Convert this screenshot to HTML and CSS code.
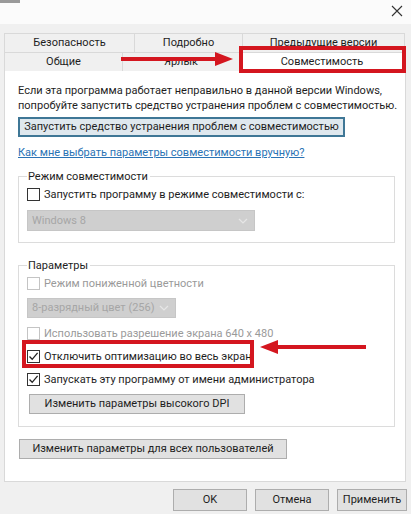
FILE: index.html
```html
<!DOCTYPE html>
<html lang="ru">
<head>
<meta charset="utf-8">
<link rel="stylesheet" href="styles.css">
</head>
<body>
<div class="window">
  <div class="titlebar">
    <span class="corner"></span>
    <svg class="close" width="12" height="12" viewBox="0 0 12 12"><path d="M1 1 L11 11 M11 1 L1 11" stroke="#333" stroke-width="1.1" fill="none"/></svg>
  </div>
  <div class="tabs">
    <div class="tabrow row1">
      <div class="tab">Безопасность</div>
      <div class="tab">Подробно</div>
      <div class="tab">Предыдущие версии</div>
    </div>
    <div class="tabrow row2">
      <div class="tab">Общие</div>
      <div class="tab">Ярлык</div>
      <div class="tab active">Совместимость</div>
    </div>
  </div>
  <div class="panel">
    <p class="intro">Если эта программа работает неправильно в данной версии Windows,<br>попробуйте запустить средство устранения проблем с совместимостью.</p>
    <div class="btn focus b-trouble">Запустить средство устранения проблем с совместимостью</div>
    <a class="link" href="#">Как мне выбрать параметры совместимости вручную?</a>
    <div class="group g1">
      <div class="legend">Режим совместимости</div>
      <div class="cb first"><span class="box"></span><span>Запустить программу в режиме совместимости с:</span></div>
      <div class="select s-win">Windows 8<svg class="chev" width="10" height="6" viewBox="0 0 10 6"><path d="M1 1 L5 5 L9 1" stroke="#e6e6e6" stroke-width="1.2" fill="none"/></svg></div>
    </div>
    <div class="group g2">
      <div class="legend">Параметры</div>
      <div class="cb first disabled"><span class="box"></span><span>Режим пониженной цветности</span></div>
      <div class="select s-color">8-разрядный цвет (256)<svg class="chev" width="10" height="6" viewBox="0 0 10 6"><path d="M1 1 L5 5 L9 1" stroke="#e6e6e6" stroke-width="1.2" fill="none"/></svg></div>
      <div class="cb disabled"><span class="box"></span><span>Использовать разрешение экрана 640 x 480</span></div>
      <div class="cb checked"><span class="box"><svg width="11" height="11" viewBox="0 0 11 11"><path d="M1.5 5.5 L4.2 8.3 L9.6 1.8" stroke="#222" stroke-width="1.3" fill="none"/></svg></span><span>Отключить оптимизацию во весь экран</span></div>
      <div class="cb checked"><span class="box"><svg width="11" height="11" viewBox="0 0 11 11"><path d="M1.5 5.5 L4.2 8.3 L9.6 1.8" stroke="#222" stroke-width="1.3" fill="none"/></svg></span><span>Запускать эту программу от имени администратора</span></div>
      <div class="btn b-dpi">Изменить параметры высокого DPI</div>
    </div>
    <div class="btn b-all">Изменить параметры для всех пользователей</div>
  </div>
  <div class="footer">
    <div class="btn b-ok">OK</div>
    <div class="btn b-cancel">Отмена</div>
    <div class="btn b-apply">Применить</div>
  </div>

  <div class="redbox rb-tab"></div>
  <div class="redbox rb-opt"></div>
  <svg class="arrow arrow-right" width="112" height="16" viewBox="0 0 112 16"><path d="M0 8 H96" stroke="#d4161f" stroke-width="4"/><path d="M94 1 L112 8 L94 15 Z" fill="#d4161f"/></svg>
  <svg class="arrow arrow-left" width="106" height="16" viewBox="0 0 106 16"><path d="M16 8 H106" stroke="#d4161f" stroke-width="4"/><path d="M18 1 L0 8 L18 15 Z" fill="#d4161f"/></svg>
</div>
</body>
</html>
```

FILE: styles.css
```css
* { box-sizing: border-box; }
html, body { margin: 0; padding: 0; }
body {
  background: #f0f0f0;
  font-family: Roboto, "Liberation Sans", Arial, sans-serif;
  font-size: 11px;
  line-height: 15px;
  color: #1e1e1e;
}
.window {
  position: relative;
  width: 411px;
  height: 514px;
  overflow: hidden;
}
.titlebar {
  height: 24px;
  background: #fbfbfb;
  position: relative;
}
.corner {
  position: absolute;
  left: 0; top: 0;
  width: 20px; height: 3px;
  background: #9a9a9a;
}
.close {
  position: absolute;
  right: 8px; top: 5px;
}
.tabs {
  margin-top: 9px;
  margin-left: 4px;
  width: 401px;
  position: relative;
  z-index: 2;
}
.tabrow { display: grid; }
.row1 { grid-template-columns: 131px 108px 162px; height: 19px; }
.row2 { grid-template-columns: 119px 117px 165px; height: 18px; }
.tab {
  border: 1px solid #d9d9d9;
  border-bottom: none;
  margin-left: -1px;
  background: #f0f0f0;
  text-align: center;
  line-height: 17px;
  white-space: nowrap;
}
.tab:first-child { margin-left: 0; }
.tab.active {
  background: #fff;
  height: 19px;
}
.panel {
  margin-left: 4px;
  width: 402px;
  height: 412px;
  background: #fff;
  border: 1px solid #d9d9d9;
  padding: 0 0 0 13px;
  position: relative;
  z-index: 1;
}
.intro {
  margin: 12px 0 0;
  line-height: 15px;
  white-space: nowrap;
}
.btn {
  height: 20px;
  background: #e1e1e1;
  border: 1px solid #adadad;
  text-align: center;
  line-height: 18px;
  white-space: nowrap;
}
.btn.focus {
  border: 2px solid #3f7796;
  background: #dfe8ee;
  line-height: 16px;
}
.b-trouble { margin-top: 4px; width: 327px; }
.link {
  display: block;
  width: fit-content;
  margin-top: 8px;
  line-height: 15px;
  color: #2a73b5;
  text-decoration: underline;
}
.group {
  border: 1px solid #dcdcdc;
  width: 377px;
  padding: 0 8px;
}
.g1 { margin-top: 16px; padding-bottom: 11px; }
.g2 { margin-top: 22px; padding-bottom: 12px; }
.legend {
  display: block;
  width: fit-content;
  margin-top: -8px;
  padding: 0 2px 0 1px;
  background: #fff;
  line-height: 15px;
}
.cb {
  display: flex;
  align-items: center;
  gap: 4px;
  height: 15px;
  margin-top: 8px;
  white-space: nowrap;
}
.g1 .cb.first { margin-top: 3px; }
.g2 .cb.first { margin-top: 3px; }
.box {
  width: 13px; height: 13px;
  border: 1px solid #333;
  background: #fff;
  display: flex;
  align-items: center;
  justify-content: center;
  flex: none;
}
.cb.disabled { color: #9a9a9a; }
.cb.disabled .box { border-color: #c4c4c4; }
.select {
  position: relative;
  background: #cfcfcf;
  border: 1px solid #c6c6c6;
  color: #a6a6a6;
  padding-left: 4px;
  white-space: nowrap;
}
.chev { position: absolute; right: 6px; top: 50%; margin-top: -3px; }
.s-win { margin-top: 8px; width: 228px; height: 21px; line-height: 19px; }
.s-color { margin-top: 7px; width: 149px; height: 20px; line-height: 18px; }
.b-dpi { margin-top: 7px; margin-left: 2px; width: 216px; }
.b-all { margin-top: 12px; margin-left: 1px; width: 268px; }
.footer {
  display: flex;
  justify-content: flex-end;
  gap: 8px;
  margin-top: 7px;
  padding-right: 4px;
}
.footer .btn { height: 22px; line-height: 20px; }
.b-ok, .b-cancel { width: 74px; }
.b-apply { width: 70px; }
.redbox {
  position: absolute;
  border: 4px solid #d4161f;
  z-index: 5;
}
.rb-tab { left: 239px; top: 46px; width: 167px; height: 27px; }
.rb-opt { left: 22px; top: 340px; width: 232px; height: 28px; }
.arrow { position: absolute; z-index: 5; }
.arrow-right { left: 121px; top: 51px; }
.arrow-left { left: 260px; top: 339px; }
```
